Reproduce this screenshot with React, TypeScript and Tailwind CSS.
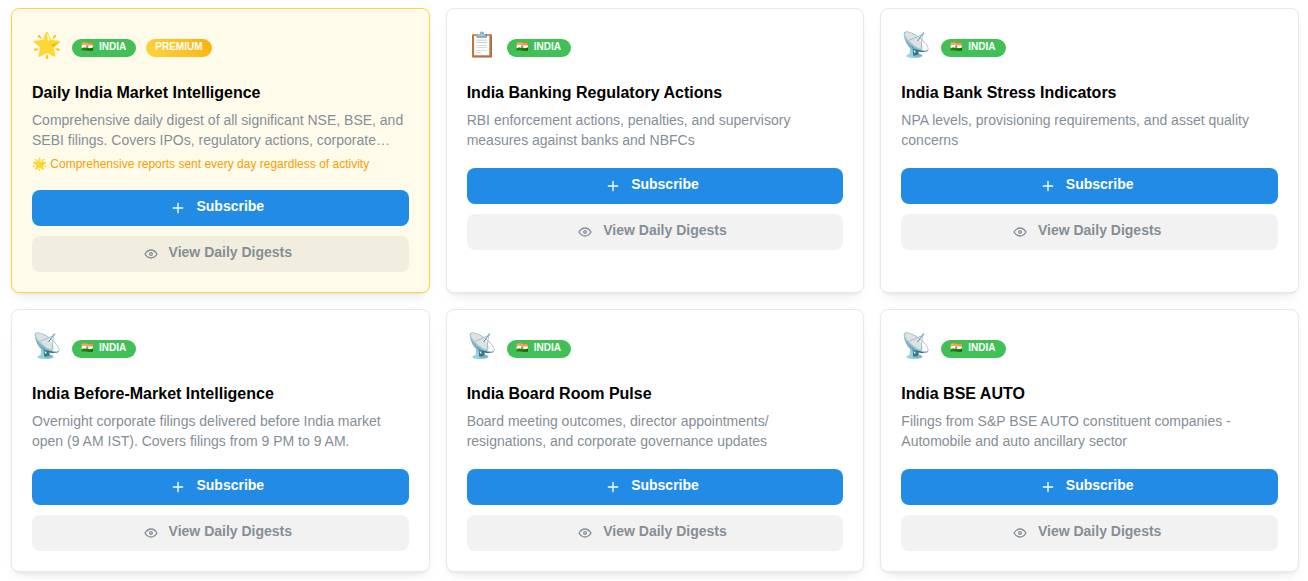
type Digest = {
  icon: string
  title: string
  description: string
  premium?: boolean
}

const digests: Digest[] = [
  {
    icon: '🌟',
    title: 'Daily India Market Intelligence',
    description:
      'Comprehensive daily digest of all significant NSE, BSE, and SEBI filings. Covers IPOs, regulatory actions, corporate…',
    premium: true,
  },
  {
    icon: '📋',
    title: 'India Banking Regulatory Actions',
    description: 'RBI enforcement actions, penalties, and supervisory measures against banks and NBFCs',
  },
  {
    icon: '📡',
    title: 'India Bank Stress Indicators',
    description: 'NPA levels, provisioning requirements, and asset quality concerns',
  },
  {
    icon: '📡',
    title: 'India Before-Market Intelligence',
    description: 'Overnight corporate filings delivered before India market open (9 AM IST). Covers filings from 9 PM to 9 AM.',
  },
  {
    icon: '📡',
    title: 'India Board Room Pulse',
    description: 'Board meeting outcomes, director appointments/\u200bresignations, and corporate governance updates',
  },
  {
    icon: '📡',
    title: 'India BSE AUTO',
    description: 'Filings from S&P BSE AUTO constituent companies - Automobile and auto ancillary sector',
  },
]

const iconProps = {
  className: 'size-4 shrink-0',
  viewBox: '0 0 24 24',
  fill: 'none',
  stroke: 'currentColor',
  strokeWidth: 2,
  strokeLinecap: 'round',
  strokeLinejoin: 'round',
  'aria-hidden': true,
} as const

function PlusIcon() {
  return (
    <svg {...iconProps}>
      <path d="M12 5v14M5 12h14" />
    </svg>
  )
}

function EyeIcon() {
  return (
    <svg {...iconProps}>
      <path d="M10 12a2 2 0 1 0 4 0a2 2 0 0 0 -4 0" />
      <path d="M21 12c-2.4 4 -5.4 6 -9 6c-3.6 0 -6.6 -2 -9 -6c2.4 -4 5.4 -6 9 -6c3.6 0 6.6 2 9 6" />
    </svg>
  )
}

function DigestCard({ icon, title, description, premium }: Digest) {
  return (
    <article
      className={`flex flex-col rounded-lg border p-5 shadow-[0_1px_3px_rgba(0,0,0,0.05),0_10px_15px_-5px_rgba(0,0,0,0.05),0_7px_7px_-5px_rgba(0,0,0,0.04)] ${
        premium ? 'border-[#ffd43b] bg-[#fffbeb]' : 'border-[#e9e9ea] bg-white'
      }`}
    >
      <div className="flex h-[38px] items-center gap-[10px]">
        <span className="pb-[6px] text-2xl leading-8">{icon}</span>
        <span className="flex h-[18px] items-center gap-[6px] rounded-full bg-[#40c057] px-[10px] pb-[3px] pl-[9px] text-[10px] leading-4 font-bold text-white">
          <span>🇮🇳</span>
          <span>INDIA</span>
        </span>
        {premium && (
          <span className="flex h-[18px] items-center rounded-full bg-linear-45 from-[#ffd43b] to-[#fab005] px-[10px] pb-[3px] pl-[9px] text-[10px] leading-4 font-bold text-white">
            PREMIUM
          </span>
        )}
      </div>

      <h3 className="mt-[14px] text-base leading-6 font-bold text-black">{title}</h3>
      <p className="mt-[5px] text-sm leading-5 text-[#868e96]">{description}</p>
      {premium && (
        <p className="mt-[5px] text-xs leading-[18px] text-[#f59f00]">
          🌟 Comprehensive reports sent every day regardless of activity
        </p>
      )}

      <div className={`flex flex-col gap-[10px] ${premium ? 'mt-[17px]' : 'mt-[18px]'}`}>
        <button type="button" className="flex h-9 items-center justify-center gap-[10px] rounded-lg bg-[#228be6] pr-[6px] text-sm font-bold text-white">
          <PlusIcon />
          <span className="pb-1">Subscribe</span>
        </button>
        <button type="button" className="flex h-9 items-center justify-center gap-[10px] rounded-lg bg-black/5 pr-[6px] text-sm font-bold text-[#868e96]">
          <EyeIcon />
          <span className="pb-1">View Daily Digests</span>
        </button>
      </div>
    </article>
  )
}

export default function App() {
  return (
    <main className="grid grid-cols-3 gap-4 bg-white py-2 pr-[9px] pl-[11px] font-['Liberation_Sans',sans-serif]">
      {digests.map(digest => (
        <DigestCard key={digest.title} {...digest} />
      ))}
    </main>
  )
}
